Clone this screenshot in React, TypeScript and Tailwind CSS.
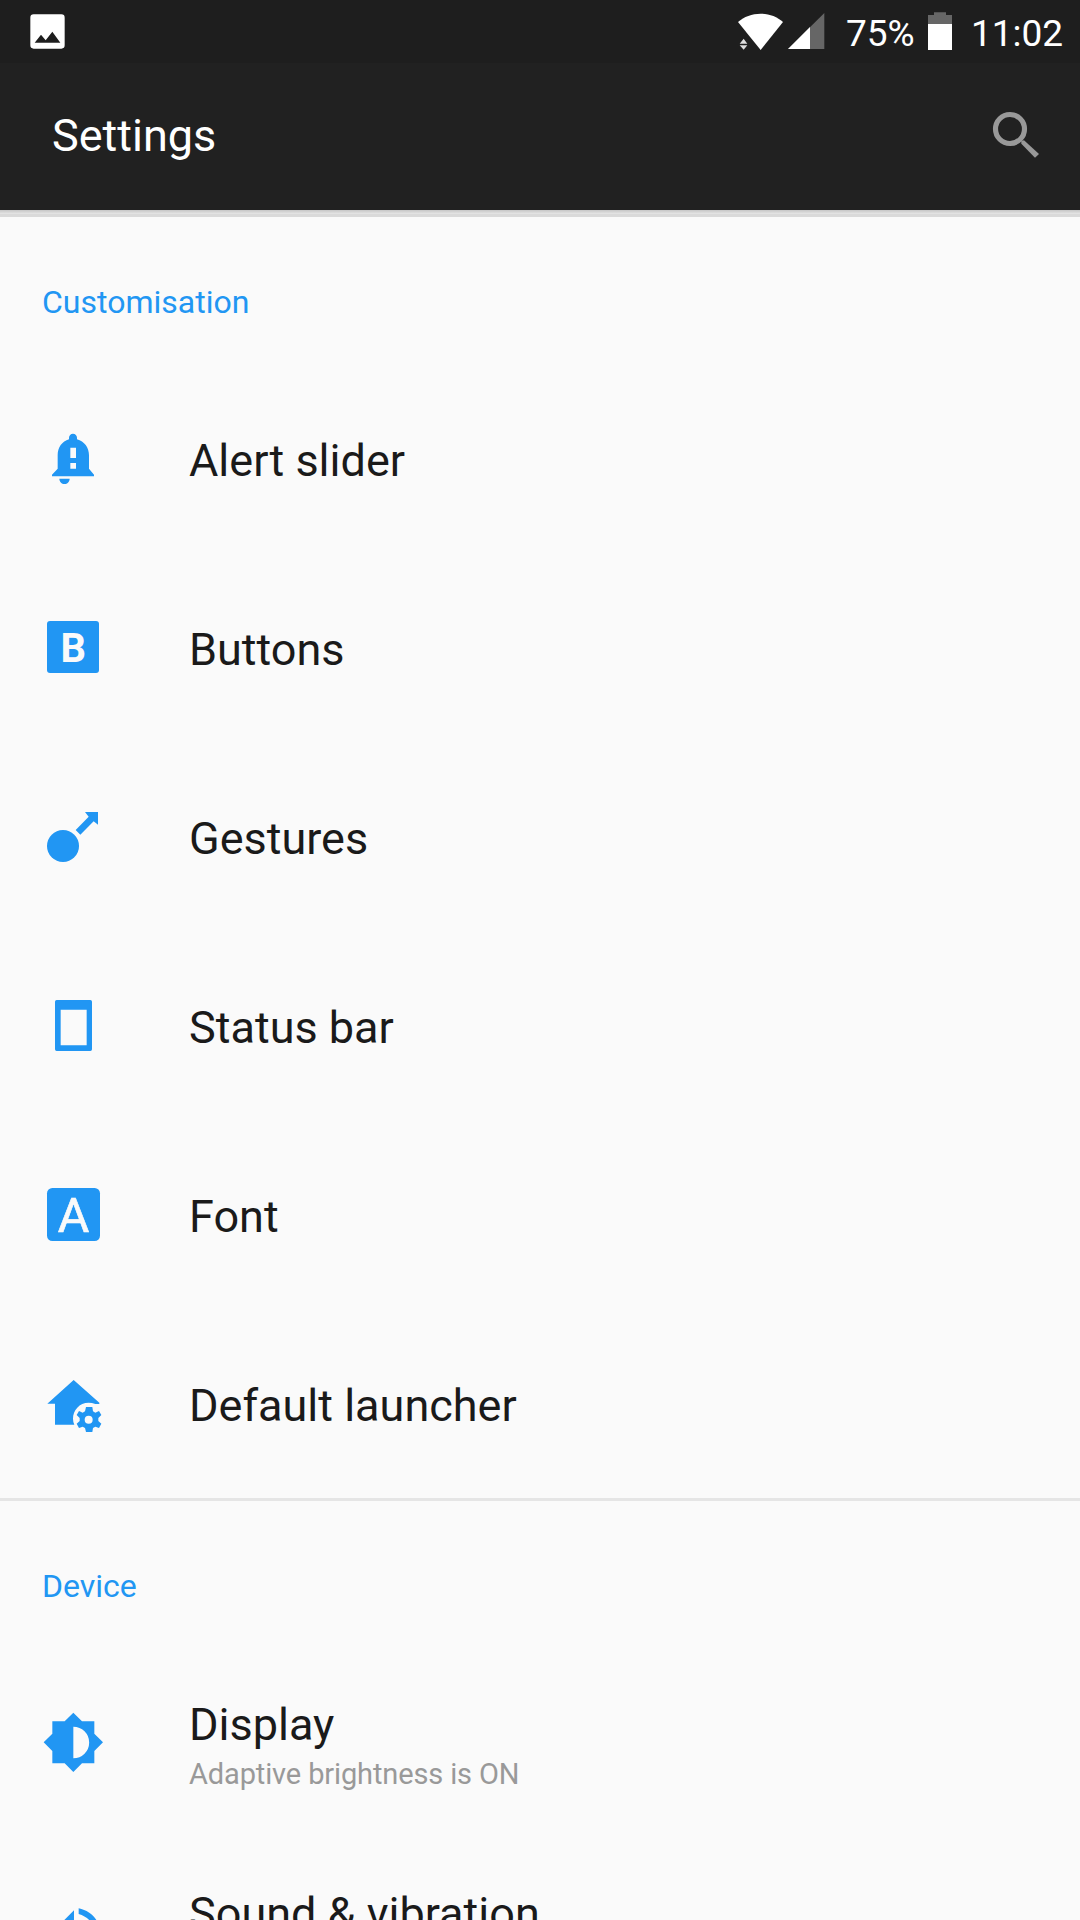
import React from "react";

type IconProps = { box: string; children: React.ReactNode };

function Icon({ box, children }: IconProps) {
  return (
    <svg viewBox={box} className="mt-[59px] ml-[37px] size-[72px] shrink-0 fill-[#2196f3]">
      {children}
    </svg>
  );
}

const bell = (
  <Icon box="51 459 216 216">
    <path
      fillRule="evenodd"
      d="M159 491c-7 0-12 5-12 12v5c-21 6-34 25-34 48v40l-17 18v5h126v-5l-15-18v-40c0-23-14-42-36-48v-5c0-7-5-12-12-12zM151 533h17v31h-17zM151 579h17v17h-17zM118 626h31c0 9-7 16-15.500 16s-15.500-7-15.500-16z"
    />
  </Icon>
);

const buttons = (
  <Icon box="51 36 216 216">
    <rect x="81" y="63" width="156" height="156" rx="9" />
    <text x="159.500" y="184.500" textAnchor="middle" className="fill-[#fafafa] font-bold" fontSize="120">
      B
    </text>
  </Icon>
);

const gestures = (
  <Icon box="51 603 216 216">
    <circle cx="129" cy="738" r="48" />
    <path d="M195 636h39v38l-13-10-40 40-14-14 39-40z" />
  </Icon>
);

const statusBar = (
  <Icon box="51 30 216 216">
    <path
      fillRule="evenodd"
      d="M110 60h101q5 0 5 5v143q0 5-5 5H110q-5 0-5-5V65q0-5 5-5zM122 89v107h78V89z"
    />
  </Icon>
);

const font = (
  <Icon box="51 597 216 216">
    <rect x="81" y="624" width="159" height="159" rx="16" />
    <text
      x="160.500"
      y="755"
      textAnchor="middle"
      className="fill-[#fafafa] stroke-[#fafafa] font-normal"
      strokeWidth="2"
      fontSize="145"
    >
      A
    </text>
  </Icon>
);

const launcher = (
  <Icon box="51 24 216 216">
    <path d="M161 60L238 128v4h-12q-10-4-20-4c-28 0-47 23-47 48q0 9 4 18h-58v-63H82z" />
    <path
      fillRule="evenodd"
      d="M198 141h19l2 13 7 4 11-5 7 12-9 9v9l9 8-7 13-11-4-7 4-2 12h-19l-3-12-7-4-11 4-7-13 9-8v-9l-9-9 7-12 11 5 7-4zM206 167a12 12 0 1 0 0 24a12 12 0 1 0 0-24z"
    />
  </Icon>
);

const display = (
  <Icon box="51 81 216 216">
    <path
      fillRule="evenodd"
      d="M223 213l26-26-26-26v-37h-37l-26-26-26 26H97v37l-26 26 26 26v37h37l26 26 26-26h37zM160 235V140a47.500 47.500 0 0 1 0 95z"
    />
  </Icon>
);

const sound = (
  <Icon box="51 648 216 216">
    <path d="M162 691v145l-38-39H92v-60h24z" />
    <path d="M176 685c39 8 66 40 66 78s-27 70-66 78v-17c29-8 50-32 50-61s-21-53-50-61z" />
  </Icon>
);

type RowProps = { icon: React.ReactNode; title: string; sub?: string; raised?: boolean };

function Row({ icon, title, sub, raised }: RowProps) {
  return (
    <div className="flex h-[189px] shrink-0">
      {icon}
      <div className={raised ? "ml-[80px] pt-[50px]" : "ml-[80px] pt-[70px]"}>
        <div className="text-[45px] leading-[53px] whitespace-nowrap text-[#1a1a1a]">{title}</div>
        {sub && (
          <div className="mt-[6px] text-[29px] leading-[34px] tracking-[-0.13px] whitespace-nowrap text-[#999]">
            {sub}
          </div>
        )}
      </div>
    </div>
  );
}

function SectionTitle({ children }: { children: React.ReactNode }) {
  return (
    <h2 className="h-[147px] shrink-0 pt-[66px] pl-[42px] text-[32px] leading-[38px] text-[#2196f3]">{children}</h2>
  );
}

export default function App() {
  return (
    <div className="flex h-[1920px] w-[1080px] flex-col overflow-hidden bg-[#fafafa] font-['Roboto',sans-serif]">
      <div className="flex h-[63px] shrink-0 justify-between bg-[#1e1e1e] text-white">
        <svg viewBox="0 0 300 189" className="h-[63px] w-[100px]">
          <path
            fill="#fff"
            fillRule="evenodd"
            d="M101 43h83q10 0 10 10v83q0 10-10 10h-83q-10 0-10-10V53q0-10 10-10zM104 128h77l-24-33-20 26-14-17z"
          />
        </svg>
        <div className="flex">
          <svg viewBox="45 0 285 189" className="h-[63px] w-[95px]">
            <path fill="#fff" d="M54 66C72 50 96 41 122 41s49 9 67 25l-67 84z" />
            <path fill="#ddd" d="M59 131l12-15 11 15zM59 136h23l-11 13z" />
            <path fill="#666" d="M313 39v108H204z" />
            <path fill="#fff" d="M270 81v66h-66z" />
          </svg>
          <span className="ml-[16px] w-[80px] pt-[12px] text-[37px] leading-[44px]">75%</span>
          <svg viewBox="618 0 84 189" className="h-[63px] w-[28px]">
            <path fill="#666" d="M624 45h18v-8h36v8h18v28h-72z" />
            <path fill="#fff" d="M624 72h72v78h-72z" />
          </svg>
          <span className="ml-[17px] w-[109px] pt-[12px] text-[37px] leading-[44px]">11:02</span>
        </div>
      </div>
      <header className="flex h-[147px] shrink-0 justify-between bg-[#212121]">
        <h1 className="pt-[46px] pl-[52px] text-[45px] leading-[53px] text-white">Settings</h1>
        <svg viewBox="780 300 216 216" className="mt-[37px] mr-[28px] size-[72px]">
          <circle cx="870" cy="387" r="43.500" fill="none" stroke="#999" strokeWidth="15.500" />
          <path d="M912 421l45 41-12 11-41-42v-8z" fill="#999" />
        </svg>
      </header>
      <div className="h-[4px] shrink-0 bg-gradient-to-b from-[#c6c6c6] to-[#e6e6e6]" />
      <div className="h-[3px] shrink-0 bg-[#dadada]" />
      <SectionTitle>Customisation</SectionTitle>
      <Row icon={bell} title="Alert slider" />
      <Row icon={buttons} title="Buttons" />
      <Row icon={gestures} title="Gestures" />
      <Row icon={statusBar} title="Status bar" />
      <Row icon={font} title="Font" />
      <Row icon={launcher} title="Default launcher" />
      <div className="h-[3px] shrink-0 bg-[#e5e5e5]" />
      <SectionTitle>Device</SectionTitle>
      <Row icon={display} title="Display" sub="Adaptive brightness is ON" raised />
      <Row icon={sound} title="Sound &amp; vibration" raised />
    </div>
  );
}
